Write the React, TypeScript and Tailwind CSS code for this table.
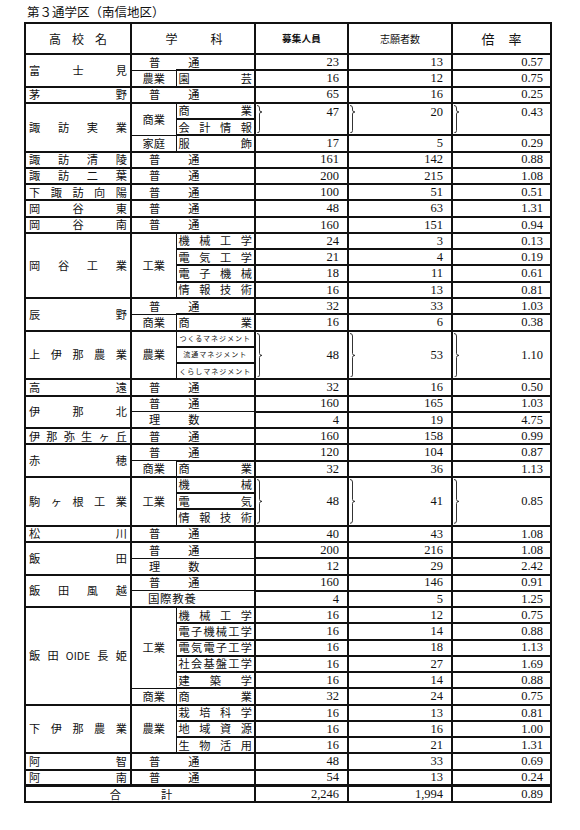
import React from "react";

type Row = {
  full?: string;
  group?: string;
  groupSpan?: number;
  sub?: string;
  small?: boolean;
  nums?: [string, string, string];
  numSpan?: number;
  brace?: "top" | "mid";
};

type School = { name: string[]; rows: Row[] };

const ROW_H = 16.28;

const SCHOOLS: School[] = [
  {
    name: ["富", "士", "見"],
    rows: [
      { full: "普通", nums: ["23", "13", "0.57"] },
      { group: "農業", groupSpan: 1, sub: "園芸", nums: ["16", "12", "0.75"] },
    ],
  },
  { name: ["茅", "野"], rows: [{ full: "普通", nums: ["65", "16", "0.25"] }] },
  {
    name: ["諏", "訪", "実", "業"],
    rows: [
      { group: "商業", groupSpan: 2, sub: "商業", nums: ["47", "20", "0.43"], numSpan: 2, brace: "top" },
      { sub: "会計情報" },
      { group: "家庭", groupSpan: 1, sub: "服飾", nums: ["17", "5", "0.29"] },
    ],
  },
  { name: ["諏", "訪", "清", "陵"], rows: [{ full: "普通", nums: ["161", "142", "0.88"] }] },
  { name: ["諏", "訪", "二", "葉"], rows: [{ full: "普通", nums: ["200", "215", "1.08"] }] },
  { name: ["下", "諏", "訪", "向", "陽"], rows: [{ full: "普通", nums: ["100", "51", "0.51"] }] },
  { name: ["岡", "谷", "東"], rows: [{ full: "普通", nums: ["48", "63", "1.31"] }] },
  { name: ["岡", "谷", "南"], rows: [{ full: "普通", nums: ["160", "151", "0.94"] }] },
  {
    name: ["岡", "谷", "工", "業"],
    rows: [
      { group: "工業", groupSpan: 4, sub: "機械工学", nums: ["24", "3", "0.13"] },
      { sub: "電気工学", nums: ["21", "4", "0.19"] },
      { sub: "電子機械", nums: ["18", "11", "0.61"] },
      { sub: "情報技術", nums: ["16", "13", "0.81"] },
    ],
  },
  {
    name: ["辰", "野"],
    rows: [
      { full: "普通", nums: ["32", "33", "1.03"] },
      { group: "商業", groupSpan: 1, sub: "商業", nums: ["16", "6", "0.38"] },
    ],
  },
  {
    name: ["上", "伊", "那", "農", "業"],
    rows: [
      { group: "農業", groupSpan: 3, sub: "つくるマネジメント", small: true, nums: ["48", "53", "1.10"], numSpan: 3, brace: "mid" },
      { sub: "流通マネジメント", small: true },
      { sub: "くらしマネジメント", small: true },
    ],
  },
  { name: ["高", "遠"], rows: [{ full: "普通", nums: ["32", "16", "0.50"] }] },
  {
    name: ["伊", "那", "北"],
    rows: [
      { full: "普通", nums: ["160", "165", "1.03"] },
      { full: "理数", nums: ["4", "19", "4.75"] },
    ],
  },
  { name: ["伊", "那", "弥", "生", "ヶ", "丘"], rows: [{ full: "普通", nums: ["160", "158", "0.99"] }] },
  {
    name: ["赤", "穂"],
    rows: [
      { full: "普通", nums: ["120", "104", "0.87"] },
      { group: "商業", groupSpan: 1, sub: "商業", nums: ["32", "36", "1.13"] },
    ],
  },
  {
    name: ["駒", "ヶ", "根", "工", "業"],
    rows: [
      { group: "工業", groupSpan: 3, sub: "機械", nums: ["48", "41", "0.85"], numSpan: 3, brace: "mid" },
      { sub: "電気" },
      { sub: "情報技術" },
    ],
  },
  { name: ["松", "川"], rows: [{ full: "普通", nums: ["40", "43", "1.08"] }] },
  {
    name: ["飯", "田"],
    rows: [
      { full: "普通", nums: ["200", "216", "1.08"] },
      { full: "理数", nums: ["12", "29", "2.42"] },
    ],
  },
  {
    name: ["飯", "田", "風", "越"],
    rows: [
      { full: "普通", nums: ["160", "146", "0.91"] },
      { full: "国際教養", nums: ["4", "5", "1.25"] },
    ],
  },
  {
    name: ["飯", "田", "OIDE", "長", "姫"],
    rows: [
      { group: "工業", groupSpan: 5, sub: "機械工学", nums: ["16", "12", "0.75"] },
      { sub: "電子機械工学", nums: ["16", "14", "0.88"] },
      { sub: "電気電子工学", nums: ["16", "18", "1.13"] },
      { sub: "社会基盤工学", nums: ["16", "27", "1.69"] },
      { sub: "建築学", nums: ["16", "14", "0.88"] },
      { group: "商業", groupSpan: 1, sub: "商業", nums: ["32", "24", "0.75"] },
    ],
  },
  {
    name: ["下", "伊", "那", "農", "業"],
    rows: [
      { group: "農業", groupSpan: 3, sub: "栽培科学", nums: ["16", "13", "0.81"] },
      { sub: "地域資源", nums: ["16", "16", "1.00"] },
      { sub: "生物活用", nums: ["16", "21", "1.31"] },
    ],
  },
  { name: ["阿", "智"], rows: [{ full: "普通", nums: ["48", "33", "0.69"] }] },
  { name: ["阿", "南"], rows: [{ full: "普通", nums: ["54", "13", "0.24"] }] },
];

const jp = "font-['Noto_Sans_CJK_JP',sans-serif]";
const num = "font-['Liberation_Serif',serif]";
const cell = "border border-[#111] p-0";

function Brace({ span, tip }: { span: number; tip: "top" | "mid" }) {
  const h = span * ROW_H - 4;
  const t = tip === "top" ? 7 : h / 2;
  const d = `M0 0.5 Q2.5 0.5 2.5 3 L2.5 ${t - 2} Q2.5 ${t} 5 ${t} Q2.5 ${t} 2.5 ${t + 2} L2.5 ${h - 3} Q2.5 ${h - 0.5} 0 ${h - 0.5}`;
  return (
    <svg width="6" height={h} className="absolute left-[1px] top-[1px]" viewBox={`0 0 6 ${h}`}>
      <path d={d} fill="none" stroke="#333" strokeWidth="1" />
    </svg>
  );
}

function Spread({ chars }: { chars: string[] }) {
  return (
    <div className="flex justify-between items-center">
      {chars.map((c, i) => (
        <span key={i} className={c.length > 1 ? "text-[10.5px]" : ""}>
          {c}
        </span>
      ))}
    </div>
  );
}

function NumCells({ row, first }: { row: Row; first: boolean }) {
  if (!row.nums) return null;
  const span = row.numSpan ?? 1;
  const top = row.brace === "top";
  return (
    <>
      {row.nums.map((n, i) => (
        <td
          key={i}
          rowSpan={span}
          className={`${cell} border-2 relative text-right ${num} text-[12.5px] leading-none ${top ? "align-top" : "align-middle"} ${
            i === 2 ? "pr-[7px]" : "pr-[8px]"
          } ${first ? "border-t-2" : ""}`}
        >
          {row.brace && <Brace span={span} tip={row.brace} />}
          <span className={top ? "block pt-[2px]" : ""}>{n}</span>
        </td>
      ))}
    </>
  );
}

function FullDept({ text }: { text: string }) {
  if (text.length === 2) {
    return (
      <div className="flex gap-[28px] pl-[17px]">
        <span>{text[0]}</span>
        <span>{text[1]}</span>
      </div>
    );
  }
  return <div className="pl-[16px] text-[11.5px] tracking-[0.6px]">{text}</div>;
}

function SchoolRows({ school }: { school: School }) {
  return (
    <>
      {school.rows.map((row, i) => {
        const t = i === 0 ? "border-t-2" : "";
        return (
          <tr key={i} style={{ height: ROW_H }}>
            {i === 0 && (
              <td rowSpan={school.rows.length} className={`${cell} border-2 px-[3px] align-middle`}>
                <Spread chars={school.name} />
              </td>
            )}
            {row.full ? (
              <td colSpan={2} className={`${cell} ${t} align-middle`}>
                <FullDept text={row.full} />
              </td>
            ) : (
              <>
                {row.group && (
                  <td rowSpan={row.groupSpan} className={`${cell} ${t} text-center align-middle`}>
                    {row.group}
                  </td>
                )}
                <td className={`${cell} border-y-2 px-[2px] align-middle`}>
                  {row.small ? (
                    <div className="text-[7px] leading-none tracking-[1px] text-center whitespace-nowrap">{row.sub}</div>
                  ) : (
                    <Spread chars={Array.from(row.sub ?? "")} />
                  )}
                </td>
              </>
            )}
            <NumCells row={row} first={i === 0} />
          </tr>
        );
      })}
    </>
  );
}

export default function App() {
  return (
    <div className={`bg-white w-[580px] min-h-[830px] text-[#111] ${jp}`}>
      <div className="pl-[27px] pt-[4px] h-[22px] text-[12.5px] leading-[16px]">第３通学区（南信地区）</div>
      <table className="ml-[24px] w-[526px] table-fixed border-collapse border-2 border-[#111] text-[11.2px] leading-none">
        <colgroup>
          <col className="w-[106px]" />
          <col className="w-[45px]" />
          <col className="w-[79px]" />
          <col className="w-[93px]" />
          <col className="w-[104px]" />
          <col className="w-[99px]" />
        </colgroup>
        <thead>
          <tr className="h-[31px]">
            <th className={`${cell} border-2 font-normal text-[12px]`}>
              <div className="flex justify-center gap-[11px]">
                <span>高</span>
                <span>校</span>
                <span>名</span>
              </div>
            </th>
            <th colSpan={2} className={`${cell} border-2 font-normal text-[12px]`}>
              <div className="flex justify-center gap-[33px] pl-[2px]">
                <span>学</span>
                <span>科</span>
              </div>
            </th>
            <th className={`${cell} border-2 font-bold text-[9.5px] tracking-[0.3px]`}>募集人員</th>
            <th className={`${cell} border-2 font-normal text-[10px]`}>志願者数</th>
            <th className={`${cell} border-2 font-normal text-[13px]`}>
              <div className="flex justify-center gap-[14px]">
                <span>倍</span>
                <span>率</span>
              </div>
            </th>
          </tr>
        </thead>
        <tbody>
          {SCHOOLS.map((s, i) => (
            <SchoolRows key={i} school={s} />
          ))}
          <tr style={{ height: ROW_H }}>
            <td colSpan={3} className={`${cell} border-2 border-t-[3px] align-middle`}>
              <div className="flex justify-center gap-[40px] pl-[2px]">
                <span>合</span>
                <span>計</span>
              </div>
            </td>
            <td className={`${cell} border-2 border-t-[3px] text-right pr-[8px] ${num} text-[12.5px]`}>2,246</td>
            <td className={`${cell} border-2 border-t-[3px] text-right pr-[8px] ${num} text-[12.5px]`}>1,994</td>
            <td className={`${cell} border-2 border-t-[3px] text-right pr-[7px] ${num} text-[12.5px]`}>0.89</td>
          </tr>
        </tbody>
      </table>
    </div>
  );
}
